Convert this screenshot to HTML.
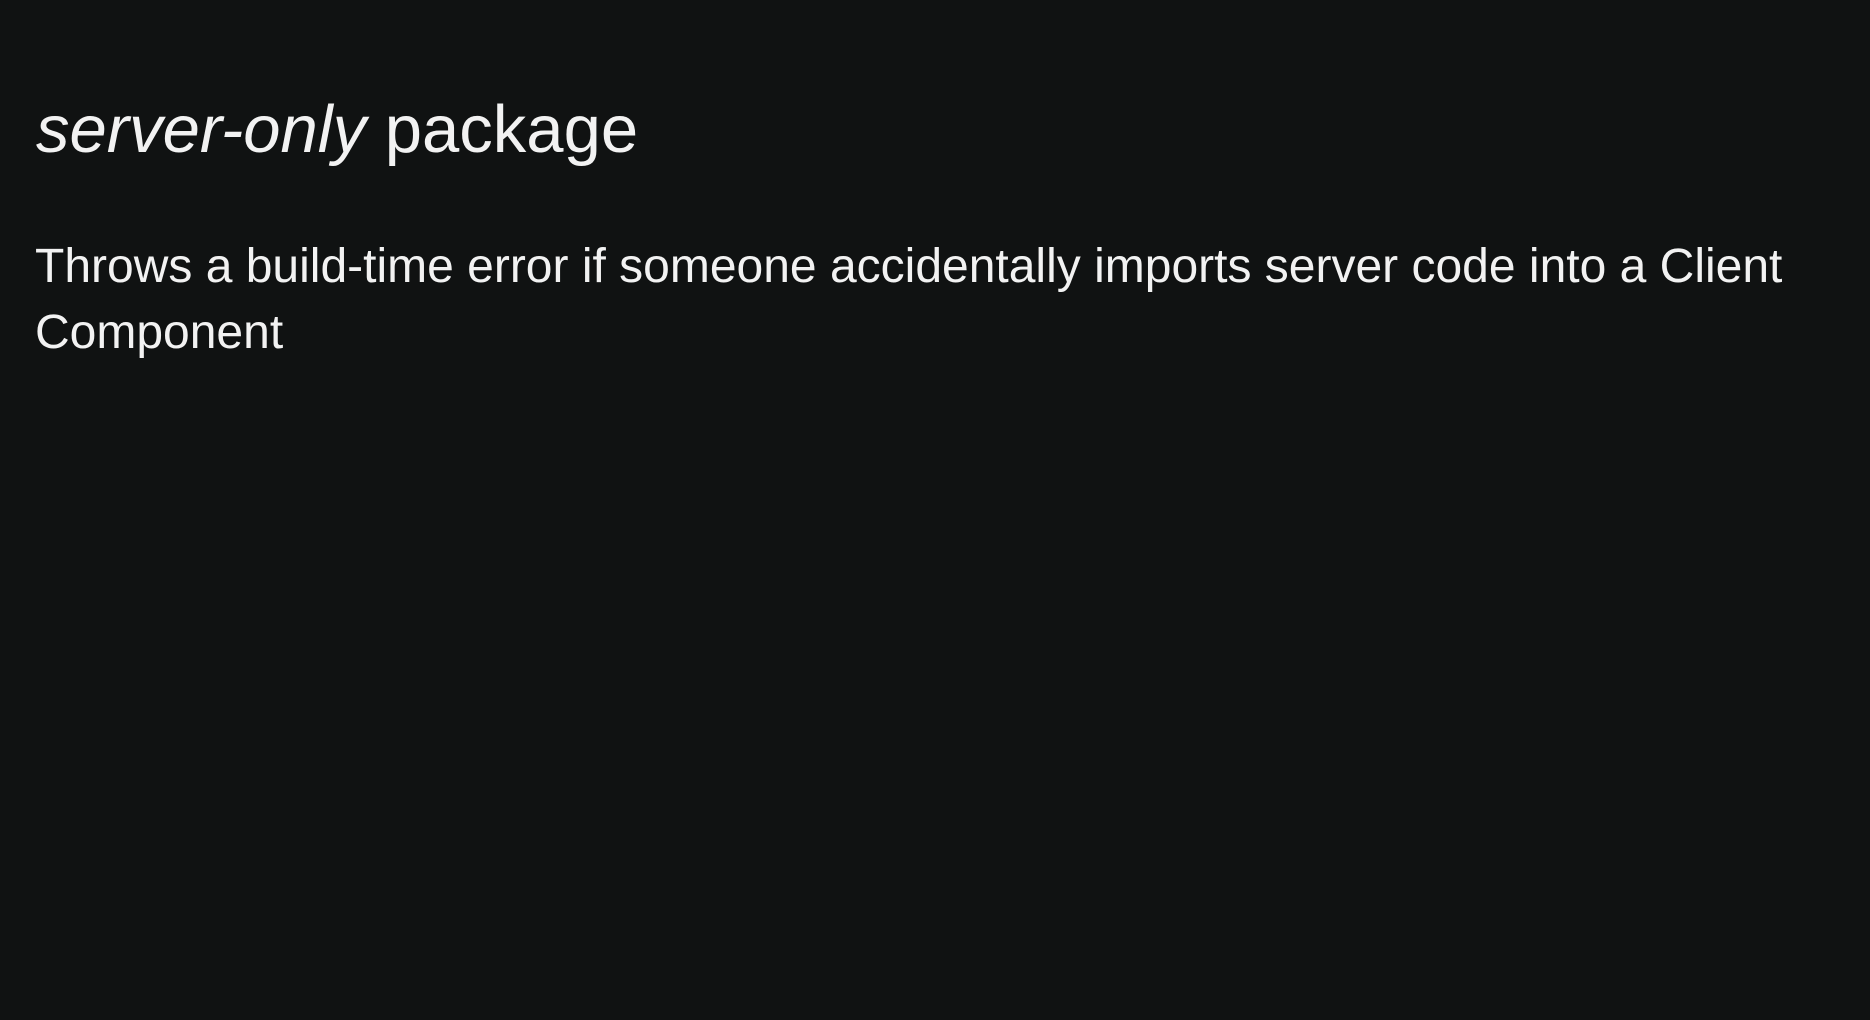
<!DOCTYPE html>
<html><head><meta charset="utf-8"><style>
html,body{margin:0;padding:0;background:#101212;width:1870px;height:1020px;overflow:hidden;}
body{font-family:"Liberation Sans",Arial,sans-serif;color:#f2f2f2;}
h1{position:absolute;left:36px;top:96px;margin:0;font-size:67px;line-height:67px;font-weight:normal;white-space:nowrap;}
p{position:absolute;left:35px;top:234px;margin:0;font-size:48px;line-height:66px;width:1830px;}
</style></head><body>
<h1><i>server-only</i> package</h1>
<p>Throws a build-time error if someone accidentally imports server code into a Client<br>Component</p>
</body></html>
